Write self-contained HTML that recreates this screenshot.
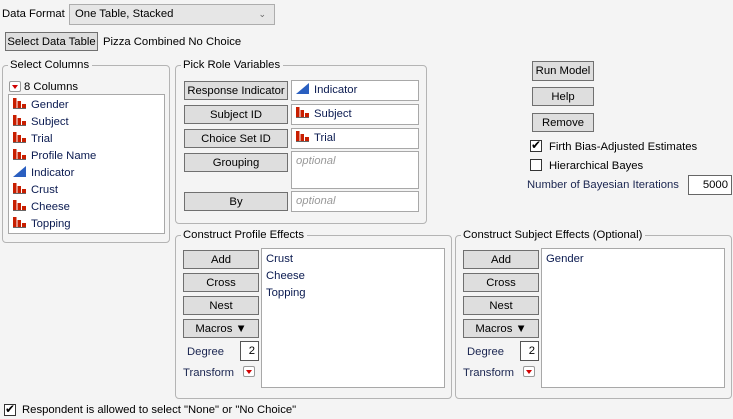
<!DOCTYPE html>
<html><head><style>
body{margin:0;width:733px;height:419px;background:#f4f4f4;font-family:"Liberation Sans",sans-serif;font-size:11.3px;color:#000;position:relative;overflow:hidden}
.a{position:absolute;white-space:nowrap;margin-top:1px}
.btn{position:absolute;background:#dedede;border:1px solid #707070;box-sizing:border-box;text-align:center;line-height:18px;font-size:11.3px;white-space:nowrap;overflow:hidden}
.grp{position:absolute;border:1px solid #b4b4b4;border-radius:4px;box-sizing:border-box}
.gl{position:absolute;top:-8px;left:5px;background:#f4f4f4;padding:0 3px 0 2px;line-height:14px;white-space:nowrap}
.box{position:absolute;background:#fff;border:1px solid #a8a8a8;box-sizing:border-box}
.it{position:absolute;left:4px;line-height:17px;color:#0a1a50;white-space:nowrap}
.nom{display:inline-block;width:13px;height:11px;vertical-align:-1px;margin-right:5px}
.opt{color:#999;font-style:italic;position:absolute;left:4px;top:3px}
.cb{position:absolute;width:12px;height:12px;border:1px solid #333;background:#fff;box-sizing:border-box}
.lbl{color:#1a2550}
.tri{position:absolute;width:12px;height:11px;border:1px solid #999;background:#fff;box-sizing:border-box;border-radius:2px}
.tri:after{content:"";position:absolute;left:2px;top:3px;border-left:3px solid transparent;border-right:3px solid transparent;border-top:4px solid #d00000}
</style></head><body>
<svg width="0" height="0" style="position:absolute"><defs>
<symbol id="n" viewBox="0 0 13 11"><rect x="0" y="0" width="3.5" height="11" fill="#c81e00"/><rect x="4.5" y="3" width="3.5" height="8" fill="#c81e00"/><rect x="9" y="6" width="4" height="5" fill="#c81e00"/><rect x="0" y="10" width="13" height="1" fill="#666"/></symbol>
<symbol id="c" viewBox="0 0 13 11"><polygon points="0,11 13,0 13,11" fill="#2a5fc0"/></symbol>
</defs></svg>

<div class="a" style="left:2px;top:7px">Data Format</div>
<div class="a" style="left:69px;top:3px;width:206px;height:21px;background:#e6e6e6;border:1px solid #adadad;box-sizing:border-box;padding-left:5px;line-height:19px">One Table, Stacked<span style="position:absolute;right:8px;top:0;font-size:9px;color:#666">&#8964;</span></div>
<div class="btn" style="left:5px;top:32px;width:93px;height:19px">Select Data Table</div>
<div class="a" style="left:103px;top:35px">Pizza Combined No Choice</div>

<div class="grp" style="left:2px;top:65px;width:168px;height:178px"><div class="gl">Select Columns</div></div>
<div class="tri" style="left:9px;top:81px"></div>
<div class="a" style="left:24px;top:80px">8 Columns</div>
<div class="box" style="left:8px;top:94px;width:157px;height:140px">
<div class="it" style="top:2px"><svg class="nom"><use href="#n"/></svg>Gender</div>
<div class="it" style="top:19px"><svg class="nom"><use href="#n"/></svg>Subject</div>
<div class="it" style="top:36px"><svg class="nom"><use href="#n"/></svg>Trial</div>
<div class="it" style="top:53px"><svg class="nom"><use href="#n"/></svg>Profile Name</div>
<div class="it" style="top:70px"><svg class="nom"><use href="#c"/></svg>Indicator</div>
<div class="it" style="top:87px"><svg class="nom"><use href="#n"/></svg>Crust</div>
<div class="it" style="top:104px"><svg class="nom"><use href="#n"/></svg>Cheese</div>
<div class="it" style="top:121px"><svg class="nom"><use href="#n"/></svg>Topping</div>
</div>

<div class="grp" style="left:175px;top:65px;width:252px;height:159px"><div class="gl">Pick Role Variables</div></div>
<div class="btn" style="left:184px;top:81px;width:104px;height:19px">Response Indicator</div>
<div class="btn" style="left:184px;top:105px;width:104px;height:19px">Subject ID</div>
<div class="btn" style="left:184px;top:129px;width:104px;height:19px">Choice Set ID</div>
<div class="btn" style="left:184px;top:153px;width:104px;height:19px">Grouping</div>
<div class="btn" style="left:184px;top:192px;width:104px;height:19px">By</div>
<div class="box" style="left:291px;top:80px;width:128px;height:21px"><div class="it" style="top:1px"><svg class="nom"><use href="#c"/></svg>Indicator</div></div>
<div class="box" style="left:291px;top:104px;width:128px;height:21px"><div class="it" style="top:1px"><svg class="nom"><use href="#n"/></svg>Subject</div></div>
<div class="box" style="left:291px;top:128px;width:128px;height:21px"><div class="it" style="top:1px"><svg class="nom"><use href="#n"/></svg>Trial</div></div>
<div class="box" style="left:291px;top:151px;width:128px;height:38px"><div class="opt">optional</div></div>
<div class="box" style="left:291px;top:191px;width:128px;height:21px"><div class="opt">optional</div></div>

<div class="btn" style="left:532px;top:61px;width:62px;height:20px;line-height:18px">Run Model</div>
<div class="btn" style="left:532px;top:87px;width:62px;height:19px">Help</div>
<div class="btn" style="left:532px;top:113px;width:62px;height:19px">Remove</div>
<div class="cb" style="left:530px;top:140px"><span style="position:absolute;left:0;top:-3px;font-size:12px">&#10004;</span></div>
<div class="a" style="left:549px;top:140px">Firth Bias-Adjusted Estimates</div>
<div class="cb" style="left:530px;top:159px"></div>
<div class="a" style="left:549px;top:159px">Hierarchical Bayes</div>
<div class="a lbl" style="left:527px;top:178px">Number of Bayesian Iterations</div>
<div class="box" style="left:688px;top:175px;width:44px;height:20px;border-color:#666;text-align:right;padding-right:3px;line-height:18px">5000</div>

<div class="grp" style="left:175px;top:235px;width:277px;height:164px"><div class="gl">Construct Profile Effects</div></div>
<div class="btn" style="left:183px;top:250px;width:76px;height:19px">Add</div>
<div class="btn" style="left:183px;top:273px;width:76px;height:19px">Cross</div>
<div class="btn" style="left:183px;top:296px;width:76px;height:19px">Nest</div>
<div class="btn" style="left:183px;top:319px;width:76px;height:19px">Macros &#9660;</div>
<div class="a lbl" style="left:187px;top:345px">Degree</div>
<div class="box" style="left:240px;top:341px;width:19px;height:20px;border-color:#555;text-align:right;padding-right:3px;line-height:18px">2</div>
<div class="a lbl" style="left:183px;top:366px">Transform</div>
<div class="tri" style="left:243px;top:366px"></div>
<div class="box" style="left:261px;top:248px;width:184px;height:140px">
<div class="it" style="top:2px;left:4px">Crust</div>
<div class="it" style="top:19px;left:4px">Cheese</div>
<div class="it" style="top:36px;left:4px">Topping</div>
</div>

<div class="grp" style="left:455px;top:235px;width:277px;height:164px"><div class="gl">Construct Subject Effects (Optional)</div></div>
<div class="btn" style="left:463px;top:250px;width:76px;height:19px">Add</div>
<div class="btn" style="left:463px;top:273px;width:76px;height:19px">Cross</div>
<div class="btn" style="left:463px;top:296px;width:76px;height:19px">Nest</div>
<div class="btn" style="left:463px;top:319px;width:76px;height:19px">Macros &#9660;</div>
<div class="a lbl" style="left:467px;top:345px">Degree</div>
<div class="box" style="left:520px;top:341px;width:19px;height:20px;border-color:#555;text-align:right;padding-right:3px;line-height:18px">2</div>
<div class="a lbl" style="left:463px;top:366px">Transform</div>
<div class="tri" style="left:523px;top:366px"></div>
<div class="box" style="left:541px;top:248px;width:184px;height:140px">
<div class="it" style="top:2px;left:4px">Gender</div>
</div>

<div class="cb" style="left:4px;top:404px"><span style="position:absolute;left:0;top:-3px;font-size:12px">&#10004;</span></div>
<div class="a" style="left:22px;top:403px">Respondent is allowed to select "None" or "No Choice"</div>
</body></html>
